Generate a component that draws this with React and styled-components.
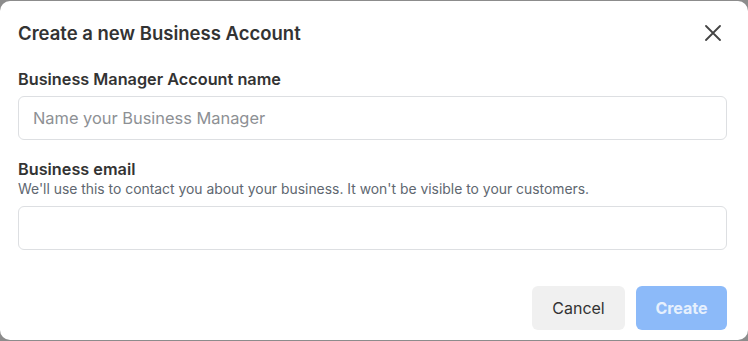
import styled, { createGlobalStyle } from 'styled-components';

const GlobalStyle = createGlobalStyle`
  html, body {
    margin: 0;
    padding: 0;
    background: #8c8c8c;
  }
  body {
    font-family: Inter, Roboto, "Liberation Sans", Arial, sans-serif;
  }
  * {
    box-sizing: border-box;
  }
`;

const Dialog = styled.div`
  width: 748px;
  height: 339px;
  margin-top: 1px;
  background: #ffffff;
  border-radius: 10px;
  padding: 16px 20px 10px 18px;
  display: flex;
  flex-direction: column;
`;

const Header = styled.div`
  display: flex;
  align-items: center;
  justify-content: space-between;
  height: 32px;
`;

const Title = styled.h2`
  margin: 0;
  font-size: 18.5px;
  font-weight: 600;
  color: #333333;
`;

const CloseButton = styled.button`
  border: none;
  background: none;
  padding: 0;
  margin-right: 6px;
  width: 18px;
  height: 18px;
  display: flex;
  align-items: center;
  justify-content: center;
  cursor: pointer;
`;

const Field = styled.div`
  display: flex;
  flex-direction: column;
  margin-top: ${(p) => p.$top}px;
`;

const Label = styled.label`
  font-size: 16.25px;
  font-weight: 600;
  color: #333333;
  line-height: 20px;
`;

const Hint = styled.div`
  font-size: 13.9px;
  color: #606770;
  line-height: 18px;
  margin-top: 1px;
`;

const Input = styled.input`
  margin-top: ${(p) => p.$gap}px;
  width: 709px;
  height: 44px;
  border: 1px solid #dddfe2;
  border-radius: 6px;
  padding: 0 14px;
  font-family: inherit;
  font-size: 16.4px;
  color: #1c1e21;
  outline: none;

  &::placeholder {
    color: #8d9094;
  }
`;

const Footer = styled.div`
  margin-top: auto;
  display: flex;
  justify-content: flex-end;
  gap: 11px;
  padding-right: 1px;
`;

const Button = styled.button`
  height: 44px;
  min-width: ${(p) => (p.$primary ? 91 : 93)}px;
  padding: 0 16px;
  border: none;
  border-radius: 6px;
  font-family: inherit;
  font-size: 16px;
  font-weight: ${(p) => (p.$primary ? 700 : 400)};
  background: ${(p) => (p.$primary ? '#8cbaf9' : '#f0f0f0')};
  color: ${(p) => (p.$primary ? '#e6f0fd' : '#333333')};
  cursor: pointer;
`;

const App = () => {
  return (
    <>
      <GlobalStyle />
      <Dialog>
        <Header>
          <Title>Create a new Business Account</Title>
          <CloseButton aria-label="Close">
            <svg width="16" height="16" viewBox="0 0 16 16">
              <path d="M1 1 L15 15 M15 1 L1 15" stroke="#444" strokeWidth="1.8" strokeLinecap="round" />
            </svg>
          </CloseButton>
        </Header>

        <Field $top={20}>
          <Label>Business Manager Account name</Label>
          <Input $gap={7} placeholder="Name your Business Manager" />
        </Field>

        <Field $top={19}>
          <Label>Business email</Label>
          <Hint>We'll use this to contact you about your business. It won't be visible to your customers.</Hint>
          <Input $gap={8} />
        </Field>

        <Footer>
          <Button>Cancel</Button>
          <Button $primary>Create</Button>
        </Footer>
      </Dialog>
    </>
  );
};

export default App;
